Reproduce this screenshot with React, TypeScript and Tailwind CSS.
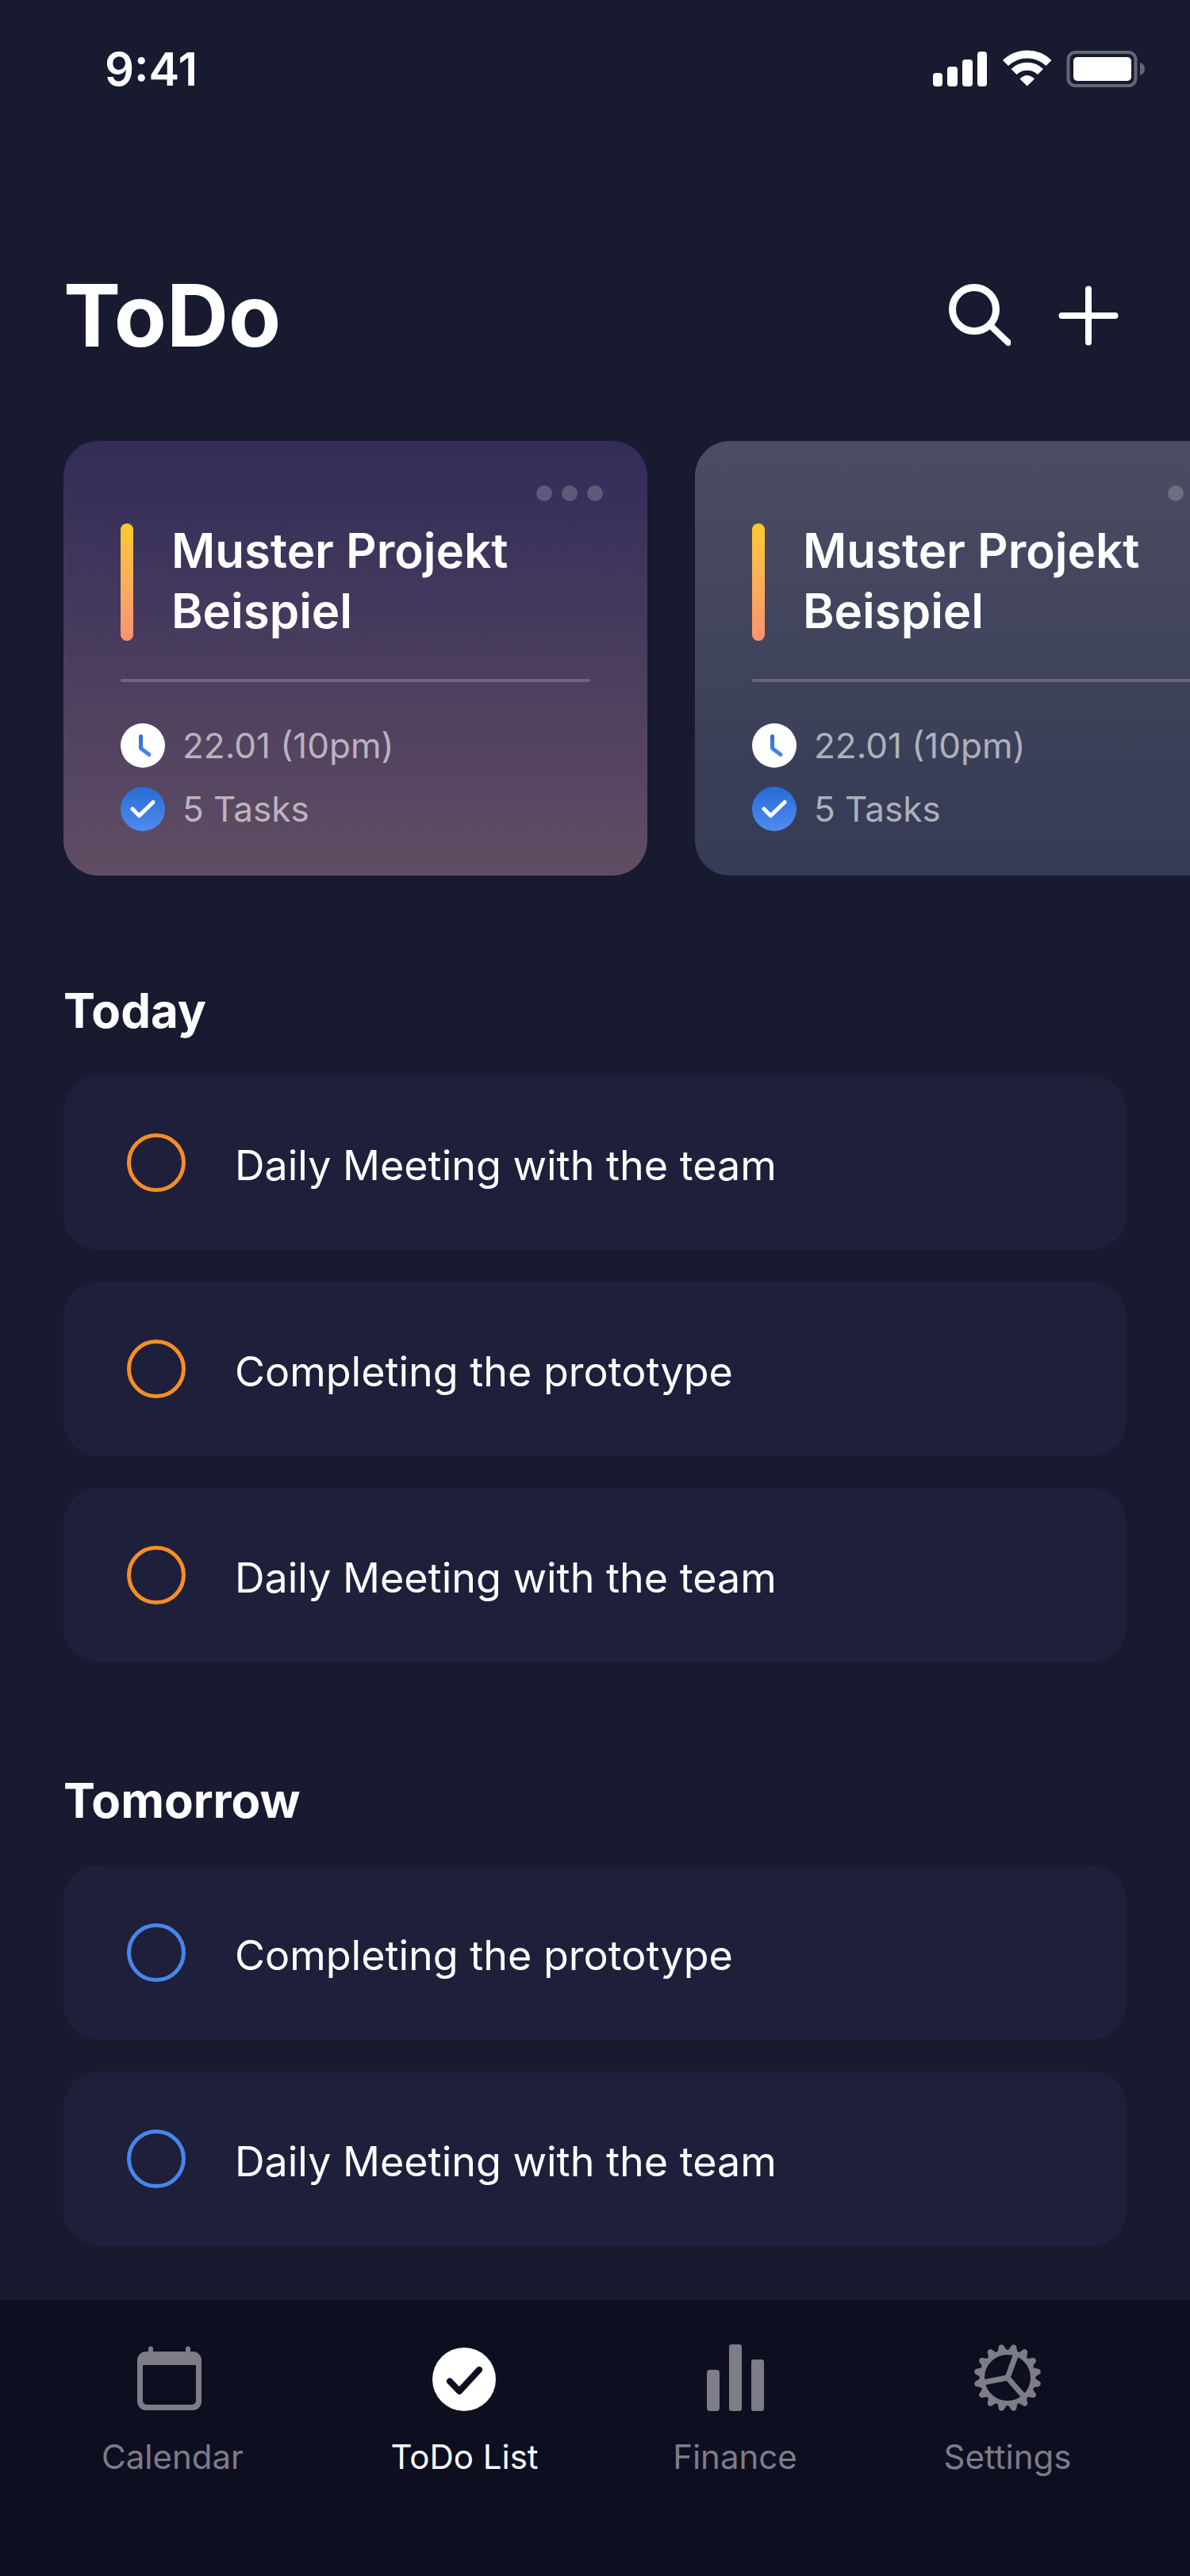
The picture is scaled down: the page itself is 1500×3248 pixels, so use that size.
import React from "react";

const teeth = Array.from({ length: 16 }, (_, i) => (i * 360) / 16 + 11.25);

function StatusBar() {
  return (
    <div className="flex items-center justify-between pl-[132px] pr-[56px] pt-[50px]">
      <time className="text-[58px] leading-[74px] font-semibold">9:41</time>
      <svg className="h-[50px] w-[270px]" viewBox="0 0 270 50" role="img" aria-label="Signal, Wi-Fi and battery">
        <g fill="#fff">
          <rect x="2" y="30" width="12" height="17" rx="4" />
          <rect x="20" y="22" width="13" height="25" rx="4" />
          <rect x="39" y="13" width="13" height="34" rx="4" />
          <rect x="58" y="3" width="12" height="44" rx="4" />
        </g>
        <g fill="none" stroke="#fff" strokeWidth="10">
          <path d="M93.500 17.500A39 39 0 0 1 148 17.500" />
          <path d="M104 28.500A24 24 0 0 1 137.500 28.500" />
        </g>
        <path d="M111.500 37.500Q120.500 28.500 130 37.500L120.700 46.500Z" fill="#fff" />
        <rect x="172.500" y="4" width="85" height="42" rx="9" fill="none" stroke="#666677" strokeWidth="4" />
        <rect x="179" y="10" width="73" height="30" rx="5" fill="#fff" />
        <path d="M263 17Q269 19 269 25Q269 31 263 33Z" fill="#666677" />
      </svg>
    </div>
  );
}

function Header() {
  return (
    <header className="flex items-center justify-between pt-[208px] pr-[90px] pl-[80px]">
      <h1 className="text-[108px] leading-[132px] font-bold">ToDo</h1>
      <div className="flex items-center gap-[60px]">
        <button type="button" aria-label="Search">
          <svg className="size-[82px]" viewBox="0 0 82 82" fill="none" stroke="#fff" strokeLinecap="round">
            <circle cx="36" cy="33" r="27.500" strokeWidth="9" />
            <path d="M57 54L79 75" strokeWidth="8" />
          </svg>
        </button>
        <button type="button" aria-label="Add">
          <svg className="size-[76px]" viewBox="0 0 76 76" fill="none" stroke="#fff" strokeWidth="8" strokeLinecap="round">
            <path d="M38 4.500V71.500M4.500 38H71.500" />
          </svg>
        </button>
      </div>
    </header>
  );
}

function ClockIcon({ id }: { id: string }) {
  return (
    <svg className="size-14" viewBox="0 0 56 56" aria-hidden="true">
      <defs>
        <linearGradient id={id} gradientUnits="userSpaceOnUse" x1="28" y1="14" x2="28" y2="42">
          <stop stopColor="#266fda" />
          <stop offset="1" stopColor="#4a89ec" />
        </linearGradient>
      </defs>
      <circle cx="28" cy="28" r="28" fill="#fff" />
      <path d="M25.500 16.500V31.500L36 39.500" fill="none" stroke={`url(#${id})`} strokeWidth="5" strokeLinecap="round" strokeLinejoin="round" />
    </svg>
  );
}

function CheckIcon({ id }: { id: string }) {
  return (
    <svg className="size-14" viewBox="0 0 56 56" aria-hidden="true">
      <defs>
        <linearGradient id={id} x1="0" y1="0" x2="0" y2="1">
          <stop stopColor="#266cd6" />
          <stop offset="1" stopColor="#4f8cf0" />
        </linearGradient>
      </defs>
      <circle cx="28" cy="28" r="28" fill={`url(#${id})`} />
      <path d="M15 28L23.500 36.500L41 19.500" fill="none" stroke="#fff" strokeWidth="5" strokeLinecap="round" strokeLinejoin="round" />
    </svg>
  );
}

function ProjectCard({ id, tone }: { id: string; tone: string }) {
  return (
    <article className={`w-[736px] shrink-0 rounded-[44px] py-14 ${tone}`}>
      <div className="flex justify-end pr-14">
        <button type="button" aria-label="Project menu" className="flex gap-3">
          <span className="size-5 rounded-full bg-white/20" />
          <span className="size-5 rounded-full bg-white/20" />
          <span className="size-5 rounded-full bg-white/20" />
        </button>
      </div>
      <div className="px-[72px] pt-6">
        <div className="flex items-end gap-12">
          <span className="h-[148px] w-4 rounded-full bg-linear-to-b from-[#ffc92b] to-[#ff9270]" />
          <h2 className="text-[60px] leading-[76px] font-semibold">
            Muster Projekt
            <br />
            Beispiel
          </h2>
        </div>
        <hr className="mt-12 h-1 rounded-full border-0 bg-white/20" />
        <ul className="flex flex-col gap-6 pt-[52px] text-[44px] leading-[56px] text-white/60">
          <li className="flex items-center gap-[22px]">
            <ClockIcon id={`${id}-clock`} />
            22.01 (10pm)
          </li>
          <li className="flex items-center gap-[22px]">
            <CheckIcon id={`${id}-check`} />
            5 Tasks
          </li>
        </ul>
      </div>
    </article>
  );
}

function TaskGroup({ title, tasks, ring }: { title: string; tasks: string[]; ring: string }) {
  return (
    <section>
      <h2 className="text-[60px] leading-[76px] font-bold">{title}</h2>
      <ul className="flex flex-col gap-10 pt-11">
        {tasks.map((task, i) => (
          <li key={i}>
            <label className="flex h-[220px] items-center gap-[62px] rounded-[44px] bg-[#1e1f3a] px-[80px]">
              <input type="checkbox" className={`size-[74px] shrink-0 appearance-none rounded-full border-5 ${ring}`} />
              <span className="pt-2 text-[52px] leading-[64px]">{task}</span>
            </label>
          </li>
        ))}
      </ul>
    </section>
  );
}

function CalendarIcon() {
  return (
    <svg className="h-[88px] w-[98px]" viewBox="0 1 98 88" fill="currentColor" aria-hidden="true">
      <path fillRule="evenodd" d="M18 14V10.500a3 3 0 0 1 6 0V14H65V10.500a3 3 0 0 1 6 0V14H74a11 11 0 0 1 11 11V77a11 11 0 0 1-11 11H15A11 11 0 0 1 4 77V25A11 11 0 0 1 15 14ZM11 31V76a5 5 0 0 0 5 5H73a5 5 0 0 0 5-5V31Z" />
    </svg>
  );
}

function TodoIcon() {
  return (
    <svg className="size-[88px]" viewBox="0 0 88 88" aria-hidden="true">
      <circle cx="43" cy="48" r="40" fill="#fff" />
      <path d="M25 50.500L37 63L62 36" fill="none" stroke="#0d0f21" strokeWidth="8" strokeLinecap="round" strokeLinejoin="round" />
    </svg>
  );
}

function FinanceIcon() {
  return (
    <svg className="size-[88px]" viewBox="0 0 88 88" fill="currentColor" aria-hidden="true">
      <rect x="8" y="36" width="16" height="52" rx="4" />
      <rect x="36" y="4" width="16" height="84" rx="3" />
      <rect x="64" y="23" width="16" height="65" rx="3" />
    </svg>
  );
}

function SettingsIcon() {
  return (
    <svg className="size-[88px]" viewBox="0 0 88 88" fill="currentColor" aria-hidden="true">
      <g transform="translate(44 46)">
        <circle r="32" fill="none" stroke="currentColor" strokeWidth="6" />
        {teeth.map((angle) => (
          <path key={angle} transform={`rotate(${angle})`} d="M-7.500 -33.500Q-4.500 -35.500 -3.900 -39Q-3 -42.500 0 -42.500Q3 -42.500 3.900 -39Q4.500 -35.500 7.500 -33.500Z" />
        ))}
        <path d="M11 -30L0 0L-31 6M0 0L21 24" fill="none" stroke="currentColor" strokeWidth="7" />
      </g>
    </svg>
  );
}

function NavItem({ label, active, children }: { label: string; active?: boolean; children: React.ReactNode }) {
  return (
    <a
      href="#"
      aria-current={active ? "page" : undefined}
      className={`flex flex-col items-center gap-8 ${active ? "text-white" : "text-[#7d7c87]"}`}
    >
      {children}
      <span className="text-[42px] leading-[52px]">{label}</span>
    </a>
  );
}

export default function App() {
  return (
    <div className="flex min-h-screen flex-col overflow-hidden bg-[#181a30] font-['Inter',sans-serif] text-white">
      <StatusBar />
      <Header />
      <main className="flex flex-1 flex-col">
        <div className="flex gap-[60px] overflow-hidden pt-[92px] pl-[80px]">
          <ProjectCard id="first" tone="bg-linear-to-b from-[#332c58] to-[#614d63]" />
          <ProjectCard id="second" tone="bg-linear-to-b from-[#4a4d63] to-[#353a55]" />
        </div>
        <div className="flex flex-col gap-[136px] px-[80px] pt-[132px] pb-[68px]">
          <TaskGroup
            title="Today"
            ring="border-[#f68e26]"
            tasks={["Daily Meeting with the team", "Completing the prototype", "Daily Meeting with the team"]}
          />
          <TaskGroup
            title="Tomorrow"
            ring="border-[#4786ea]"
            tasks={["Completing the prototype", "Daily Meeting with the team"]}
          />
        </div>
      </main>
      <nav className="grid grid-cols-[367fr_369fr_313fr_374fr] bg-[#0d0f21] pt-[52px] pr-[43px] pb-[124px] pl-[34px]">
        <NavItem label="Calendar"><CalendarIcon /></NavItem>
        <NavItem label="ToDo List" active><TodoIcon /></NavItem>
        <NavItem label="Finance"><FinanceIcon /></NavItem>
        <NavItem label="Settings"><SettingsIcon /></NavItem>
      </nav>
    </div>
  );
}
